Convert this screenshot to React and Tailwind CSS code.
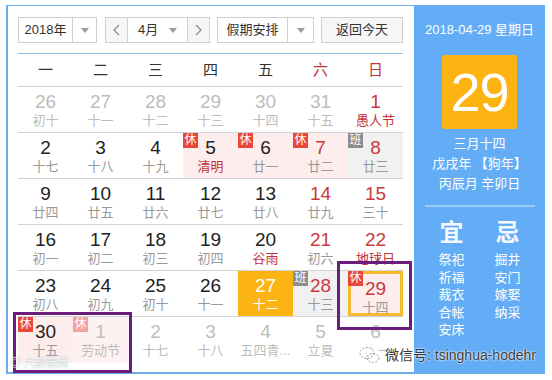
import React from "react";

const weeks = [
  [["26", "初十", "o"], ["27", "十一", "o"], ["28", "十二", "o"], ["29", "十三", "o"], ["30", "十四", "o"], ["31", "十五", "o"], ["1", "愚人节", "r lr"]],
  [["2", "十七", ""], ["3", "十八", ""], ["4", "十九", ""], ["5", "清明", "x lr"], ["6", "廿一", "x"], ["7", "廿二", "x r"], ["8", "廿三", "b r"]],
  [["9", "廿四", ""], ["10", "廿五", ""], ["11", "廿六", ""], ["12", "廿七", ""], ["13", "廿八", ""], ["14", "廿九", "r"], ["15", "三十", "r"]],
  [["16", "初一", ""], ["17", "初二", ""], ["18", "初三", ""], ["19", "初四", ""], ["20", "谷雨", "lr"], ["21", "初六", "r"], ["22", "地球日", "r lr"]],
  [["23", "初八", ""], ["24", "初九", ""], ["25", "初十", ""], ["26", "十一", ""], ["27", "十二", "t"], ["28", "十三", "b r"], ["29", "十四", "x s r"]],
  [["30", "十五", "x"], ["1", "劳动节", "o f"], ["2", "十七", "o"], ["3", "十八", "o"], ["4", "五四青...", "o"], ["5", "立夏", "o"], ["6", "廿一", "o"]],
];

const Caret = () => (
  <svg width="8" height="5" viewBox="0 0 8 5"><path d="M0 0h8L4 5z" fill="#9a9a9a" /></svg>
);

const Chevron = ({ dir }) => (
  <svg width="7" height="12" viewBox="0 0 7 12">
    <path d={dir === "l" ? "M6 1L1 6l5 5" : "M1 1l5 5-5 5"} fill="none" stroke="#888" strokeWidth="1.2" />
  </svg>
);

function Cell({ d, l, f }) {
  const has = (k) => f.split(" ").includes(k);
  let bg = "";
  if (has("x")) bg = "bg-[#fdeded]";
  if (has("f")) bg = "bg-[#fdf1f1]";
  if (has("b")) bg = "bg-[#f1f1f1]";
  if (has("t")) bg = "bg-[#fcb414]";
  let num = "text-[#222]";
  if (has("r")) num = "text-[#c9393f]";
  if (has("o")) num = "text-[#bdbdbd]";
  if (has("t")) num = "text-white";
  let lun = "text-[#999]";
  if (has("lr")) lun = "text-[#c0333a]";
  if (has("o")) lun = "text-[#bdbdbd]";
  if (has("t")) lun = "text-white";
  return (
    <div className={`relative w-[55px] h-full flex flex-col items-center pt-[4px] ${bg} ${has("s") ? "border-[3px] border-[#f6ba2e] pt-[1px]" : ""}`}>
      {(has("x") || has("f")) && (
        <span className={`absolute ${has("s") ? "-left-[3px] -top-[3px]" : "left-0 top-0"} w-[15px] h-[15px] text-[12px] leading-[15px] text-center text-white ${has("f") ? "bg-[#f0a3a3]" : "bg-[#e8473c]"}`}>休</span>
      )}
      {has("b") && (
        <span className="absolute left-0 top-0 w-[15px] h-[15px] text-[12px] leading-[15px] text-center text-white bg-[#8d8d8d]">班</span>
      )}
      <span className={`text-[19px] leading-[22px] ${num}`}>{d}</span>
      <span className={`text-[13px] leading-[16px] whitespace-nowrap ${lun}`}>{l}</span>
    </div>
  );
}

export default function App() {
  const days = ["一", "二", "三", "四", "五", "六", "日"];
  return (
    <div className="relative w-[552px] h-[380px] bg-white overflow-hidden pt-[5px] pl-[6px] font-['Liberation_Sans','Noto_Sans_CJK_SC',sans-serif]">
      <div className="flex w-[539px] h-[369px] border-l-2 border-t border-b-2 border-[#6aaee9]">
        {/* calendar */}
        <div className="w-[406px] pt-[11px] pl-[10px] pr-[11px]">
          <div className="flex h-[26px] gap-[7px] text-[13px] text-[#333]">
            <div className="flex w-[79px] mr-[1px] border border-[#cfcfcf]">
              <span className="flex-1 flex items-center justify-center">2018年</span>
              <span className="w-[24px] border-l border-[#cfcfcf] flex items-center justify-center"><Caret /></span>
            </div>
            <div className="flex w-[105px] border border-[#cfcfcf]">
              <span className="w-[22px] bg-[#f6f6f6] border-r border-[#cfcfcf] flex items-center justify-center"><Chevron dir="l" /></span>
              <span className="flex-1 flex items-center justify-between pl-[10px] pr-[10px]">4月<Caret /></span>
              <span className="w-[22px] bg-[#f6f6f6] border-l border-[#cfcfcf] flex items-center justify-center"><Chevron dir="r" /></span>
            </div>
            <div className="flex w-[97px] border border-[#cfcfcf]">
              <span className="flex-1 flex items-center justify-center">假期安排</span>
              <span className="w-[26px] border-l border-[#cfcfcf] flex items-center justify-center"><Caret /></span>
            </div>
            <div className="w-[82px] border border-[#cfcfcf] bg-[#f6f6f6] flex items-center justify-center">返回今天</div>
          </div>
          <div className="mt-[10px] border-t border-[#8dbde0] h-[34px] border-b border-b-[#d2d2d2] flex">
            {days.map((w, i) => (
              <div key={w} className={`w-[55px] flex items-center justify-center text-[15px] ${i > 4 ? "text-[#c0333a]" : "text-[#333]"}`}>{w}</div>
            ))}
          </div>
          {weeks.map((row, ri) => (
            <div key={ri} className={`flex h-[46px] ${ri < 5 ? "border-b border-[#d2d2d2]" : ""}`}>
              {row.map(([d, l, f], ci) => (
                <Cell key={ci} d={d} l={l} f={f} />
              ))}
            </div>
          ))}
        </div>

        {/* side panel */}
        <div className="w-[131px] bg-[#62adf6] flex flex-col items-center text-white pt-[16px]">
          <div className="text-[13px] leading-[16px]">2018-04-29 星期日</div>
          <div className="mt-[17px] w-[75px] h-[74px] rounded-[2px] bg-[#fdb312] flex items-center justify-center text-[54px] tracking-[-1px] leading-none">29</div>
          <div className="mt-[5px] text-[13px] leading-[20px] text-center">
            <div>三月十四</div>
            <div>戊戌年 【狗年】</div>
            <div>丙辰月 辛卯日</div>
          </div>
          <div className="mt-[11px] w-[110px] h-[2px] bg-[#9ccbf8]" />
          <div className="mt-[12px] flex gap-[16px]">
            {[["宜", ["祭祀", "祈福", "裁衣", "合帐", "安床"]], ["忌", ["掘井", "安门", "嫁娶", "纳采"]]].map(([h, items]) => (
              <div key={h} className="w-[40px] flex flex-col items-center">
                <span className="text-[24px] leading-[28px] font-bold text-white/95">{h}</span>
                <div className="mt-[4px] flex flex-col items-center text-[13px] leading-[17.5px]">
                  {items.map((t) => <span key={t}>{t}</span>)}
                </div>
              </div>
            ))}
          </div>
        </div>
      </div>

      {/* annotation boxes */}
      <div className="absolute left-[337px] top-[261px] w-[75px] h-[69px] border-[3px] border-[#6b1d7c]" />
      <div className="absolute left-[13px] top-[312px] w-[119px] h-[61px] border-[3px] border-[#6b1d7c]" />

      {/* watermarks */}
      <div className="absolute left-[10px] top-[356px] text-[11px] leading-[14px] text-white/90 [text-shadow:0_0_2px_#8aa]">◎ 六部商闻</div>
      <div className="absolute left-[357px] top-[343px] flex items-center gap-[2px]">
        <svg width="26" height="24" viewBox="0 0 26 24">
          <circle cx="12" cy="12" r="11" fill="white" opacity="0.85" />
          <ellipse cx="10" cy="10" rx="7" ry="5.5" fill="none" stroke="#999" strokeWidth="1" strokeDasharray="2 1.5" />
          <ellipse cx="16" cy="15" rx="6" ry="4.5" fill="none" stroke="#999" strokeWidth="1" strokeDasharray="2 1.5" />
        </svg>
        <span className="text-[14px] leading-[18px] text-[#3a3a3a] [text-shadow:0_0_2px_#fff,0_0_2px_#fff]">微信号: tsinghua-hodehr</span>
      </div>
    </div>
  );
}
